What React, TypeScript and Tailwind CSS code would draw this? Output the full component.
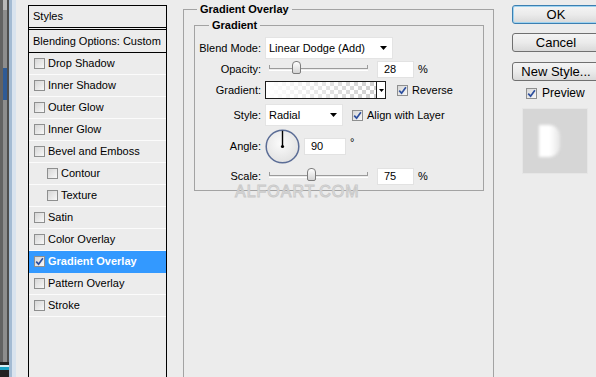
import { ReactNode } from 'react';

interface StyleItem {
  label: string;
  indent?: boolean;
  checked?: boolean;
  active?: boolean;
}

const styleItems: StyleItem[] = [
  { label: 'Drop Shadow' },
  { label: 'Inner Shadow' },
  { label: 'Outer Glow' },
  { label: 'Inner Glow' },
  { label: 'Bevel and Emboss' },
  { label: 'Contour', indent: true },
  { label: 'Texture', indent: true },
  { label: 'Satin' },
  { label: 'Color Overlay' },
  { label: 'Gradient Overlay', checked: true, active: true },
  { label: 'Pattern Overlay' },
  { label: 'Stroke' }
];

function CheckBox({ checked = false }: { checked?: boolean }) {
  return (
    <span className="flex h-[11px] w-[11px] shrink-0 items-center justify-center border border-[#8e8f8f] bg-linear-to-br from-[#d6d6d6] to-[#f8f8f8]">
      {checked && (
        <svg width="9" height="9" viewBox="0 0 9 9">
          <path d="M1.2 4.6 L3.6 7.2 L7.9 1.2" fill="none" stroke="#2d4f9e" strokeWidth="1.7" />
        </svg>
      )}
    </span>
  );
}

function Arrow() {
  return (
    <svg width="7" height="4" viewBox="0 0 7 4">
      <path d="M0 0 H7 L3.5 4 Z" fill="#000" />
    </svg>
  );
}

function Select({ value, width }: { value: string; width: string }) {
  return (
    <div className={`flex h-[22px] items-center justify-between border border-[#e4e4e4] bg-white pl-[3px] pr-[5px] ${width}`}>
      <span>{value}</span>
      <Arrow />
    </div>
  );
}

function Slider({ pos }: { pos: string }) {
  return (
    <div className="relative ml-[8px] h-[3px] w-[99px] border-t border-b border-t-[#9b9b9b] border-b-white">
      <span className="absolute -top-[4px] left-0 h-[4px] w-px bg-[#9b9b9b]" />
      <span className="absolute -top-[4px] right-0 h-[4px] w-px bg-[#9b9b9b]" />
      <span
        className={`absolute -top-[8px] h-[13px] w-[9px] rounded-t-[4px] rounded-b-[2px] border border-[#7d7d7d] bg-linear-to-b from-white to-[#d4d4d4] ${pos}`}
      />
    </div>
  );
}

function NumberBox({ value, width = 'w-[37px]' }: { value: string; width?: string }) {
  return (
    <div className={`flex h-[17px] items-center border border-[#e2e2e2] bg-white pl-[6px] ${width}`}>
      {value}
    </div>
  );
}

function Row({ label, height, className = '', children }: { label: string; height: string; className?: string; children: ReactNode }) {
  return (
    <div className={`flex items-center ${height} ${className}`}>
      <div className="w-[66px] shrink-0 text-right">{label}</div>
      {children}
    </div>
  );
}

function Button({ label, primary = false, className = '' }: { label: string; primary?: boolean; className?: string }) {
  return (
    <div
      className={`flex h-[19px] w-[88px] shrink-0 items-center justify-center rounded-[3px] border bg-linear-to-b from-[#f4f4f4] via-[#ebebeb] to-[#d9d9d9] text-[13px] leading-none ${
        primary ? 'border-[#3c7fb1] shadow-[inset_0_0_0_1px_#9fd3f0]' : 'border-[#707070]'
      } ${className}`}
    >
      {label}
    </div>
  );
}

export default function App() {
  return (
    <div className="relative flex h-[377px] w-[596px] overflow-hidden bg-[#ececec] font-['Liberation_Sans',Arial,sans-serif] text-[11px] leading-[13px] text-black">
      {/* window frame on the left */}
      <div className="flex w-[16px] shrink-0 flex-col">
        <div className="flex flex-1">
          <div className="w-[3px] bg-[#626262]" />
          <div className="flex w-[4px] flex-col bg-[#8d8d8d]">
            <div className="h-[10px] bg-[#b8b8b8]" />
            <div className="mt-[58px] h-[32px] bg-[#2f5b95]" />
          </div>
          <div className="w-[2px] bg-[#4d4d4d]" />
          <div className="w-[3px] bg-[#a4bbd3]" />
          <div className="w-[4px] bg-[#d9e3ee]" />
        </div>
        <div className="flex h-[15px]">
          <div className="flex w-[9px] flex-col bg-[#222]">
            <div className="mt-[3px] h-[2px] bg-[#d8eef4]" />
            <div className="h-[3px] bg-[#1ba2c4]" />
          </div>
          <div className="w-[3px] bg-[#a4bbd3]" />
          <div className="w-[4px] bg-[#d9e3ee]" />
        </div>
      </div>

      {/* styles list */}
      <div className="ml-[12px] mt-[5px] flex w-[139px] shrink-0 flex-col border-x border-t border-black">
        <div className="flex h-[22px] items-center border-b border-black pl-[4px]">Styles</div>
        <div className="mt-[1px] flex h-[24px] items-center border-y border-black pl-[4px]">Blending Options: Custom</div>
        {styleItems.map(item => (
          <div
            key={item.label}
            className={`flex h-[22px] items-center gap-[3px] border-b ${item.indent ? 'pl-[18px]' : 'pl-[5px]'} ${
              item.active ? 'border-[#3399ff] bg-[#3399ff] font-bold text-white' : 'border-[#fbfbfb]'
            }`}
          >
            <CheckBox checked={item.checked} />
            <span>{item.label}</span>
          </div>
        ))}
      </div>

      {/* Gradient Overlay group */}
      <fieldset className="ml-[16px] mt-[3px] h-[390px] w-[311px] shrink-0 border border-b-0 border-[#a3a3a3]">
        <legend className="ml-[13px] px-[3px] font-bold">Gradient Overlay</legend>
        <fieldset className="ml-[10px] mt-[3px] h-[172px] w-[290px] border border-[#a3a3a3]">
          <legend className="ml-[14px] px-[3px] font-bold">Gradient</legend>
          <div className="flex flex-col pt-[5px]">
            <Row label="Blend Mode:" height="h-[22px]">
              <div className="ml-[4px]">
                <Select value="Linear Dodge (Add)" width="w-[128px]" />
              </div>
            </Row>

            <Row label="Opacity:" height="h-[18px]" className="mt-[1px]">
              <Slider pos="left-[23px]" />
              <div className="ml-[9px]">
                <NumberBox value="28" />
              </div>
              <span className="ml-[4px]">%</span>
            </Row>

            <Row label="Gradient:" height="h-[18px]" className="mt-[3px]">
              <div className="ml-[4px] flex h-[18px] w-[121px] border border-[#1c1c1c]">
                <svg className="flex-1" height="16" viewBox="0 0 110 16" preserveAspectRatio="none">
                  <defs>
                    <pattern id="chk" width="8" height="8" patternUnits="userSpaceOnUse">
                      <rect width="8" height="8" fill="#fff" />
                      <rect width="4" height="4" fill="#cfcfcf" />
                      <rect x="4" y="4" width="4" height="4" fill="#cfcfcf" />
                    </pattern>
                    <linearGradient id="fade" x1="0" x2="1" y1="0" y2="0">
                      <stop offset="0" stopColor="#fff" stopOpacity="1" />
                      <stop offset="1" stopColor="#fff" stopOpacity="0" />
                    </linearGradient>
                  </defs>
                  <rect width="110" height="16" fill="url(#chk)" />
                  <rect width="110" height="16" fill="url(#fade)" />
                </svg>
                <div className="flex w-[9px] items-center justify-center border-l border-[#1c1c1c] bg-white">
                  <svg width="5" height="3" viewBox="0 0 5 3">
                    <path d="M0 0 H5 L2.5 3 Z" fill="#000" />
                  </svg>
                </div>
              </div>
              <div className="ml-[11px] flex items-center gap-[4px]">
                <CheckBox checked />
                <span>Reverse</span>
              </div>
            </Row>

            <Row label="Style:" height="h-[22px]" className="mt-[5px]">
              <div className="ml-[4px]">
                <Select value="Radial" width="w-[78px]" />
              </div>
              <div className="ml-[9px] flex items-center gap-[4px]">
                <CheckBox checked />
                <span>Align with Layer</span>
              </div>
            </Row>

            <Row label="Angle:" height="h-[35px]" className="mt-[3px]">
              <svg className="ml-[4px]" width="35" height="35" viewBox="0 0 35 35">
                <defs>
                  <radialGradient id="dial" cx="0.45" cy="0.4" r="0.6">
                    <stop offset="0" stopColor="#fbfbfb" />
                    <stop offset="1" stopColor="#e2e2e2" />
                  </radialGradient>
                </defs>
                <circle cx="17.5" cy="17.5" r="16.3" fill="url(#dial)" stroke="#5b6d96" strokeWidth="1.5" />
                <line x1="17.5" y1="17.5" x2="17.5" y2="1.8" stroke="#000" strokeWidth="1.4" />
                <circle cx="17.5" cy="17.5" r="1.6" fill="#000" />
              </svg>
              <div className="ml-[4px]">
                <NumberBox value="90" width="w-[42px]" />
              </div>
              <span className="mb-[8px] ml-[4px]">°</span>
            </Row>

            <Row label="Scale:" height="h-[16px]" className="mt-[4px]">
              <Slider pos="left-[38px]" />
              <div className="ml-[9px]">
                <NumberBox value="75" />
              </div>
              <span className="ml-[4px]">%</span>
            </Row>
          </div>
        </fieldset>
      </fieldset>

      {/* buttons and preview */}
      <div className="ml-[18px] mt-[5px] flex shrink-0 flex-col">
        <Button label="OK" primary />
        <Button label="Cancel" className="mt-[9px]" />
        <Button label="New Style..." className="mt-[10px]" />
        <div className="ml-[14px] mt-[6px] flex h-[13px] items-center gap-[5px] text-[12px]">
          <CheckBox checked />
          <span>Preview</span>
        </div>
        <div className="ml-[10px] mt-[8px] h-[66px] w-[66px] border border-[#e6e6e6] bg-[#d6d6d6] pl-[16px] pt-[16px]">
          <div className="h-[32px] w-[21px] rounded-r-[11px] bg-linear-to-r from-white via-white to-[#e6e6e6] blur-[1.5px]" />
        </div>
      </div>

      {/* watermark */}
      <div className="pointer-events-none absolute left-[235px] top-[187px] text-[16px] leading-[10px] tracking-[1px] text-[#f3f3f3] [-webkit-text-stroke:1px_#c9c9c9]">
        ALFOART.COM
      </div>
    </div>
  );
}
